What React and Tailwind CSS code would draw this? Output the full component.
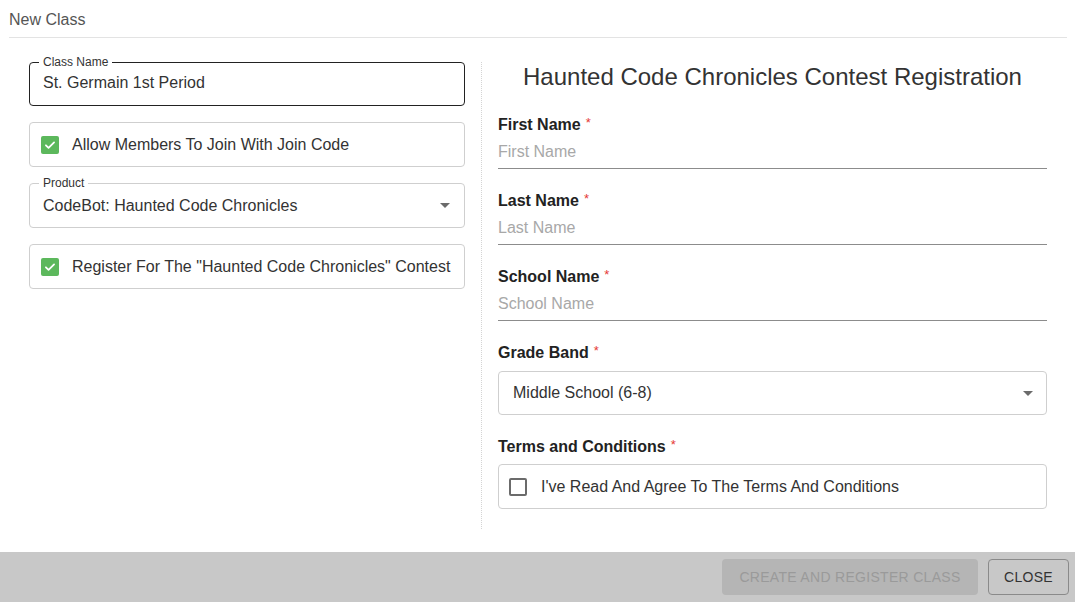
import React from 'react';

function Check({ checked }) {
  if (!checked) {
    return <span className="block w-[18px] h-[18px] shrink-0 rounded-[2px] border-2 border-[#6b6b6b] bg-white" />;
  }
  return (
    <span className="flex items-center justify-center w-[18px] h-[18px] shrink-0 rounded-[2px] bg-[#5cb85c]">
      <svg width="14" height="14" viewBox="0 0 24 24" fill="none" stroke="white" strokeWidth="3" strokeLinecap="round" strokeLinejoin="round">
        <path d="M5 12.5l4.5 4.5L19 7.5" />
      </svg>
    </span>
  );
}

function Caret() {
  return (
    <svg width="10" height="5" viewBox="0 0 10 5" className="shrink-0">
      <path d="M0 0h10L5 5z" fill="#6b6b6b" />
    </svg>
  );
}

function CheckRow({ checked, label, pad = 'pl-[11px]', gap = 'ml-[13px]' }) {
  return (
    <div className={`flex items-center h-[45px] border border-[#cfcfcf] rounded-[4px] ${pad}`}>
      <Check checked={checked} />
      <span className={`${gap} text-[16px] text-[#333] whitespace-nowrap`}>{label}</span>
    </div>
  );
}

function Outlined({ label, value, focused, select }) {
  return (
    <div className={`relative flex items-center rounded-[4px] px-[13px] border ${focused ? 'h-[44px] border-[#222]' : 'h-[45px] border-[#cfcfcf]'}`}>
      <span className="absolute left-[9px] -top-[8px] bg-white px-[4px] text-[12px] leading-[14px] text-[#333]">{label}</span>
      <span className={`flex-1 text-[16px] text-[#333] ${focused ? '-mt-[2px]' : ''}`}>{value}</span>
      {select && <span className="mr-[1px]"><Caret /></span>}
    </div>
  );
}

function Req({ children }) {
  return (
    <div className="text-[16px] font-bold text-[#222] leading-[20px]">
      {children}
      <span className="text-[#e53935] font-normal text-[13px] align-top ml-[5px] relative -top-[2px]">*</span>
    </div>
  );
}

function LineField({ label }) {
  return (
    <div className="mb-[22px]">
      <Req>{label}</Req>
      <div className="text-[16px] text-[#a8a8a8] leading-[20px] mt-[7px] pb-[6px] border-b border-[#8c8c8c]">{label}</div>
    </div>
  );
}

export default function App() {
  return (
    <div className="w-full h-[602px] flex flex-col bg-white text-[#333]" style={{ fontFamily: '"Liberation Sans", Arial, sans-serif' }}>
      <div className="flex-1 flex flex-col">
        <div className="mx-[9px] mr-[8px] pt-[10px] pb-[8px] border-b border-[#e3e3e3] text-[16px] leading-[19px] text-[#555]">
          New Class
        </div>

        <div className="flex pl-[29px] pr-[28px] pt-[24px]">
          {/* left column */}
          <div className="w-[436px] flex flex-col gap-[16px]">
            <Outlined label="Class Name" value="St. Germain 1st Period" focused />
            <CheckRow checked label="Allow Members To Join With Join Code" />
            <Outlined label="Product" value="CodeBot: Haunted Code Chronicles" select />
            <CheckRow checked label={'Register For The "Haunted Code Chronicles" Contest'} />
          </div>

          <div className="mx-[16px] border-l border-dotted border-[#d4d4d4] h-[467px]" />

          {/* right column */}
          <div className="flex-1">
            <h2 className="text-center text-[24px] leading-[28px] text-[#333] mt-[1px] mb-[24px]">
              Haunted Code Chronicles Contest Registration
            </h2>
            <LineField label="First Name" />
            <LineField label="Last Name" />
            <LineField label="School Name" />

            <Req>Grade Band</Req>
            <div className="mt-[8px] flex items-center h-[44px] border border-[#cfcfcf] rounded-[4px] pl-[14px] pr-[13px]">
              <span className="flex-1 text-[16px] text-[#333]">Middle School (6-8)</span>
              <Caret />
            </div>

            <div className="mt-[22px]">
              <Req>Terms and Conditions</Req>
            </div>
            <div className="mt-[7px]">
              <CheckRow label="I've Read And Agree To The Terms And Conditions" pad="pl-[10px]" gap="ml-[14px]" />
            </div>
          </div>
        </div>
      </div>

      <div className="h-[50px] shrink-0 bg-[#c8c8c8] flex items-center justify-end gap-[10px] pr-[6px]">
        <button className="h-[36px] w-[256px] rounded-[4px] bg-[#b5b5b5] text-[14px] text-[#9a9a9a] tracking-[0.3px]">
          CREATE AND REGISTER CLASS
        </button>
        <button className="h-[36px] w-[81px] rounded-[4px] border border-[#8a8a8a] text-[14px] text-[#333] tracking-[0.3px]">
          CLOSE
        </button>
      </div>
    </div>
  );
}
